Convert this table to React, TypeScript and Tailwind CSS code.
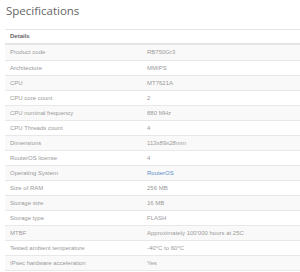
const specs: [string, string][] = [
  ["Product code", "RB750Gr3"],
  ["Architecture", "MMIPS"],
  ["CPU", "MT7621A"],
  ["CPU core count", "2"],
  ["CPU nominal frequency", "880 MHz"],
  ["CPU Threads count", "4"],
  ["Dimensions", "113x89x28mm"],
  ["RouterOS license", "4"],
  ["Operating System", "RouterOS"],
  ["Size of RAM", "256 MB"],
  ["Storage size", "16 MB"],
  ["Storage type", "FLASH"],
  ["MTBF", "Approximately 100'000 hours at 25C"],
  ["Tested ambient temperature", "-40°C to 60°C"],
  ["IPsec hardware acceleration", "Yes"],
];

export default function App() {
  return (
    <div className="w-[300px] h-[272px] overflow-hidden bg-white font-['Liberation_Sans',Arial,sans-serif]">
      <h2 className="h-[29px] pl-[6px] pt-[3px] font-['Open_Sans',sans-serif] text-[11.5px] leading-[16px] text-[#666]">
        Specifications
      </h2>
      <div className="ml-[5px]">
        <div className="h-[16px] border-t border-b-2 border-[#e4e4e4] flex items-center pl-[5px] text-[6px] font-bold text-[#666]">
          Details
        </div>
        {specs.map(([label, value], i) => (
          <div
            key={label}
            className={`h-[15px] flex items-center text-[6px] text-[#999] ${i === 0 ? "" : "border-t border-[#e8e8e8]"} ${i % 2 === 0 ? "bg-[#f9f9f9]" : "bg-white"}`}
          >
            <div className="w-[137px] pl-[5px]">{label}</div>
            <div className="pl-[5px]">
              {label === "Operating System" ? <span className="text-[#5b8fc9]">{value}</span> : value}
            </div>
          </div>
        ))}
        <div className="border-t border-[#e8e8e8]" />
      </div>
    </div>
  );
}
